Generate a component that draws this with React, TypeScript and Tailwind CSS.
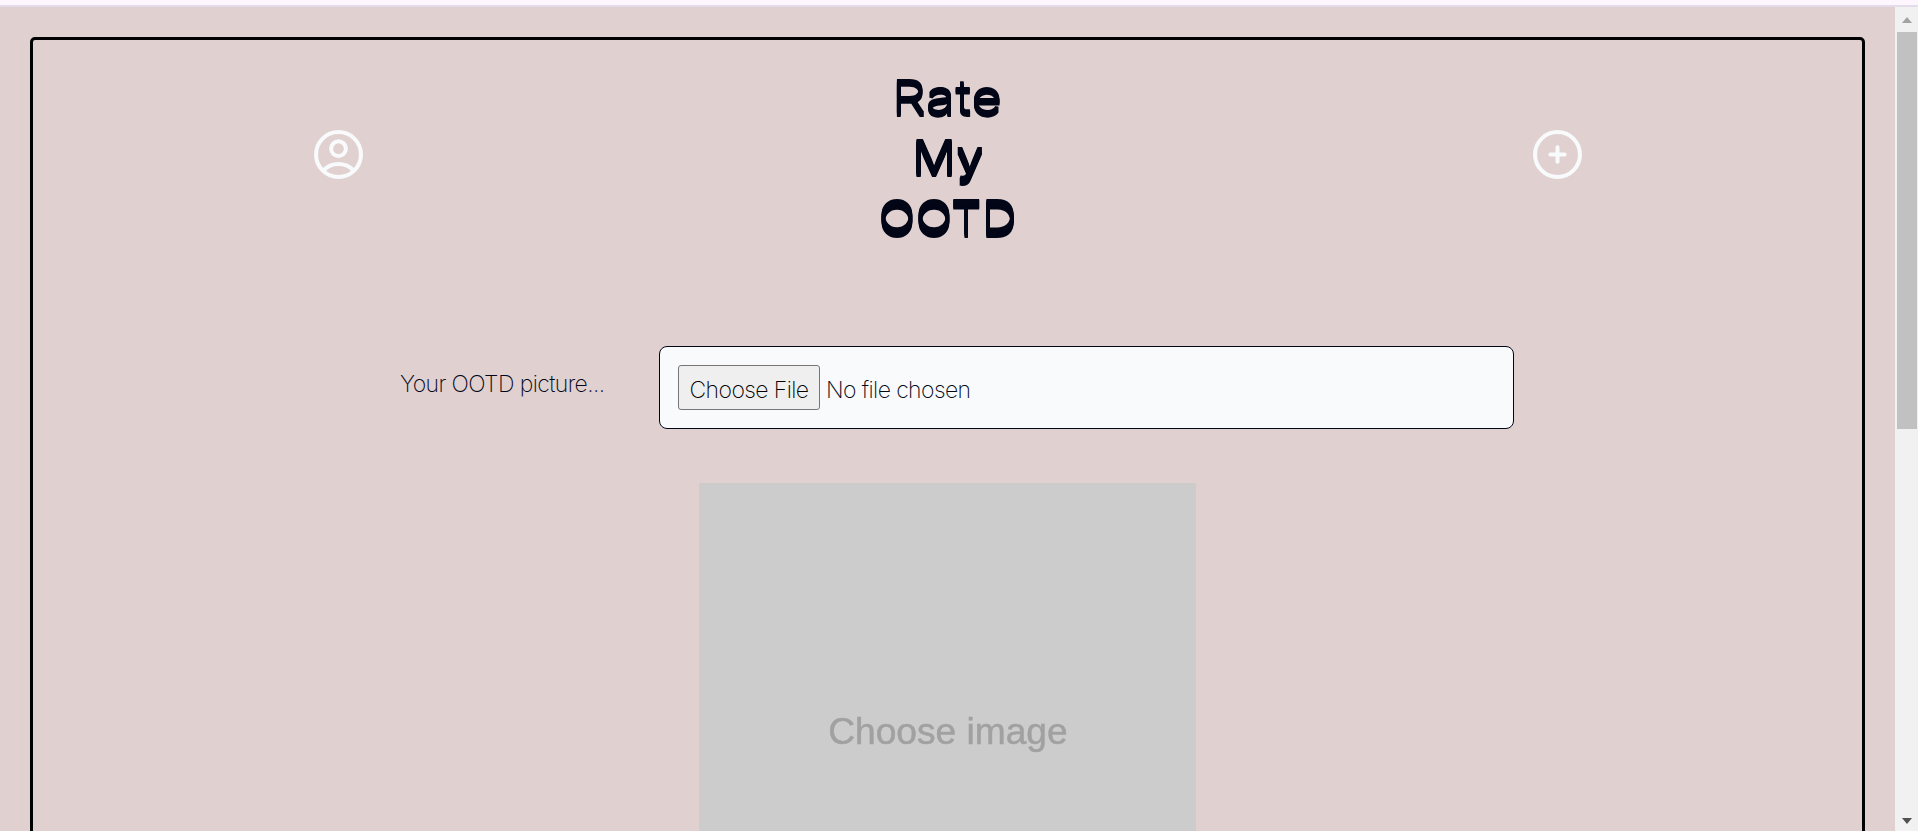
import React from "react";

function ProfileIcon() {
  return (
    <svg viewBox="0 0 48 48" className="size-[49px]" fill="none" stroke="#f8fafc" strokeWidth="4">
      <circle cx="24" cy="24" r="22" />
      <circle cx="24" cy="18.3" r="7.2" />
      <path d="M9.5 39.5C13 35.500 18 33.300 24 33.300S35 35.500 38.500 39.500" />
    </svg>
  );
}

function AddIcon() {
  return (
    <svg viewBox="0 0 48 48" className="size-[49px]" fill="none" stroke="#f8fafc" strokeWidth="4">
      <circle cx="24" cy="24" r="22" />
      <path d="M24 17v14M17 24h14" strokeLinecap="round" />
    </svg>
  );
}

function Title() {
  return (
    <h1 className="flex w-60 flex-col items-center font-['Inter','Liberation_Sans',sans-serif] leading-[60px] whitespace-nowrap text-[#020617]">
      <span className="scale-x-[1.2] text-[45px] leading-[60px] font-light [text-shadow:0_-1px_#020617,0_1px_#020617,0_2px_#020617,0_3px_#020617,0_4px_#020617]">Rate</span>
      <span className="scale-x-[1.15] text-[42px] leading-[60px] font-normal [text-shadow:0_-2px_#020617,0_-1px_#020617,0_1px_#020617,0_2px_#020617,0_3px_#020617,0_4px_#020617,0_5px_#020617]">My</span>
      <span className="scale-x-[1.16] text-[42px] leading-[60px] font-light [text-shadow:0_-2px_#020617,0_-1px_#020617,0_1px_#020617,0_2px_#020617,0_3px_#020617,0_4px_#020617,0_5px_#020617,0_6px_#020617]">OOTD</span>
    </h1>
  );
}

function FileField() {
  return (
    <div className="flex h-[83px] w-[855px] items-center rounded-lg border border-[#020617] bg-[#f8fafc] pl-[18px]">
      <button className="flex h-[45px] w-[142px] items-center justify-center rounded-[3px] border border-[#767676] bg-[#efefef] pt-1 whitespace-nowrap text-black">
        <span>Choose File</span>
      </button>
      <span className="ml-[6px] pt-1 whitespace-nowrap">No file chosen</span>
    </div>
  );
}

function Scrollbar() {
  return (
    <div className="flex w-[23px] shrink-0 flex-col items-center bg-[#f1f1f1]">
      <div className="flex h-[25px] items-center">
        <svg viewBox="0 0 10 6" className="h-[6px] w-[10px] fill-[#a3a3a3]"><path d="M0 6L5 0l5 6z" /></svg>
      </div>
      <div className="h-[397px] w-5 bg-[#c1c1c1]" />
      <svg viewBox="0 0 10 6" className="mt-auto mb-[7px] h-[6px] w-[10px] fill-[#505050]"><path d="M0 0L5 6l5-6z" /></svg>
    </div>
  );
}

export default function App() {
  return (
    <div className="flex h-[831px] w-[1918px] flex-col overflow-hidden bg-[#e0d0d0]">
      <div className="h-[7px] shrink-0 border-b-2 border-[#e4dcea] bg-[#fdf6ff]" />
      <div className="flex min-h-0 flex-1">
        <div className="min-w-0 flex-1 overflow-hidden px-[30px] pt-[30px]">
          <main className="flex h-[1200px] flex-col items-center rounded-[5px] border-[3px] border-black pt-[27px]">
            <header className="flex h-[180px] w-[1268px] items-start justify-between">
              <div className="pt-[62.5px]"><ProfileIcon /></div>
              <Title />
              <div className="pt-[62.5px]"><AddIcon /></div>
            </header>
            <div className="mt-[99px] ml-[19px] flex w-[1114px] justify-between font-['Inter','Liberation_Sans',sans-serif] text-[23px] leading-8 font-extralight tracking-[-0.6px] text-[#020617]">
              <label className="pt-[22px] whitespace-nowrap">Your OOTD picture...</label>
              <FileField />
            </div>
            <div className="mt-[54px] flex h-[497px] w-[497px] items-center justify-center bg-[#cccccc] font-['Liberation_Sans',sans-serif] text-[37.500px] text-[#a1a1a1]">
              <span className="scale-x-[.99] whitespace-nowrap blur-[0.5px] [-webkit-text-stroke:0.5px_#a1a1a1]">Choose image</span>
            </div>
          </main>
        </div>
        <Scrollbar />
      </div>
    </div>
  );
}
